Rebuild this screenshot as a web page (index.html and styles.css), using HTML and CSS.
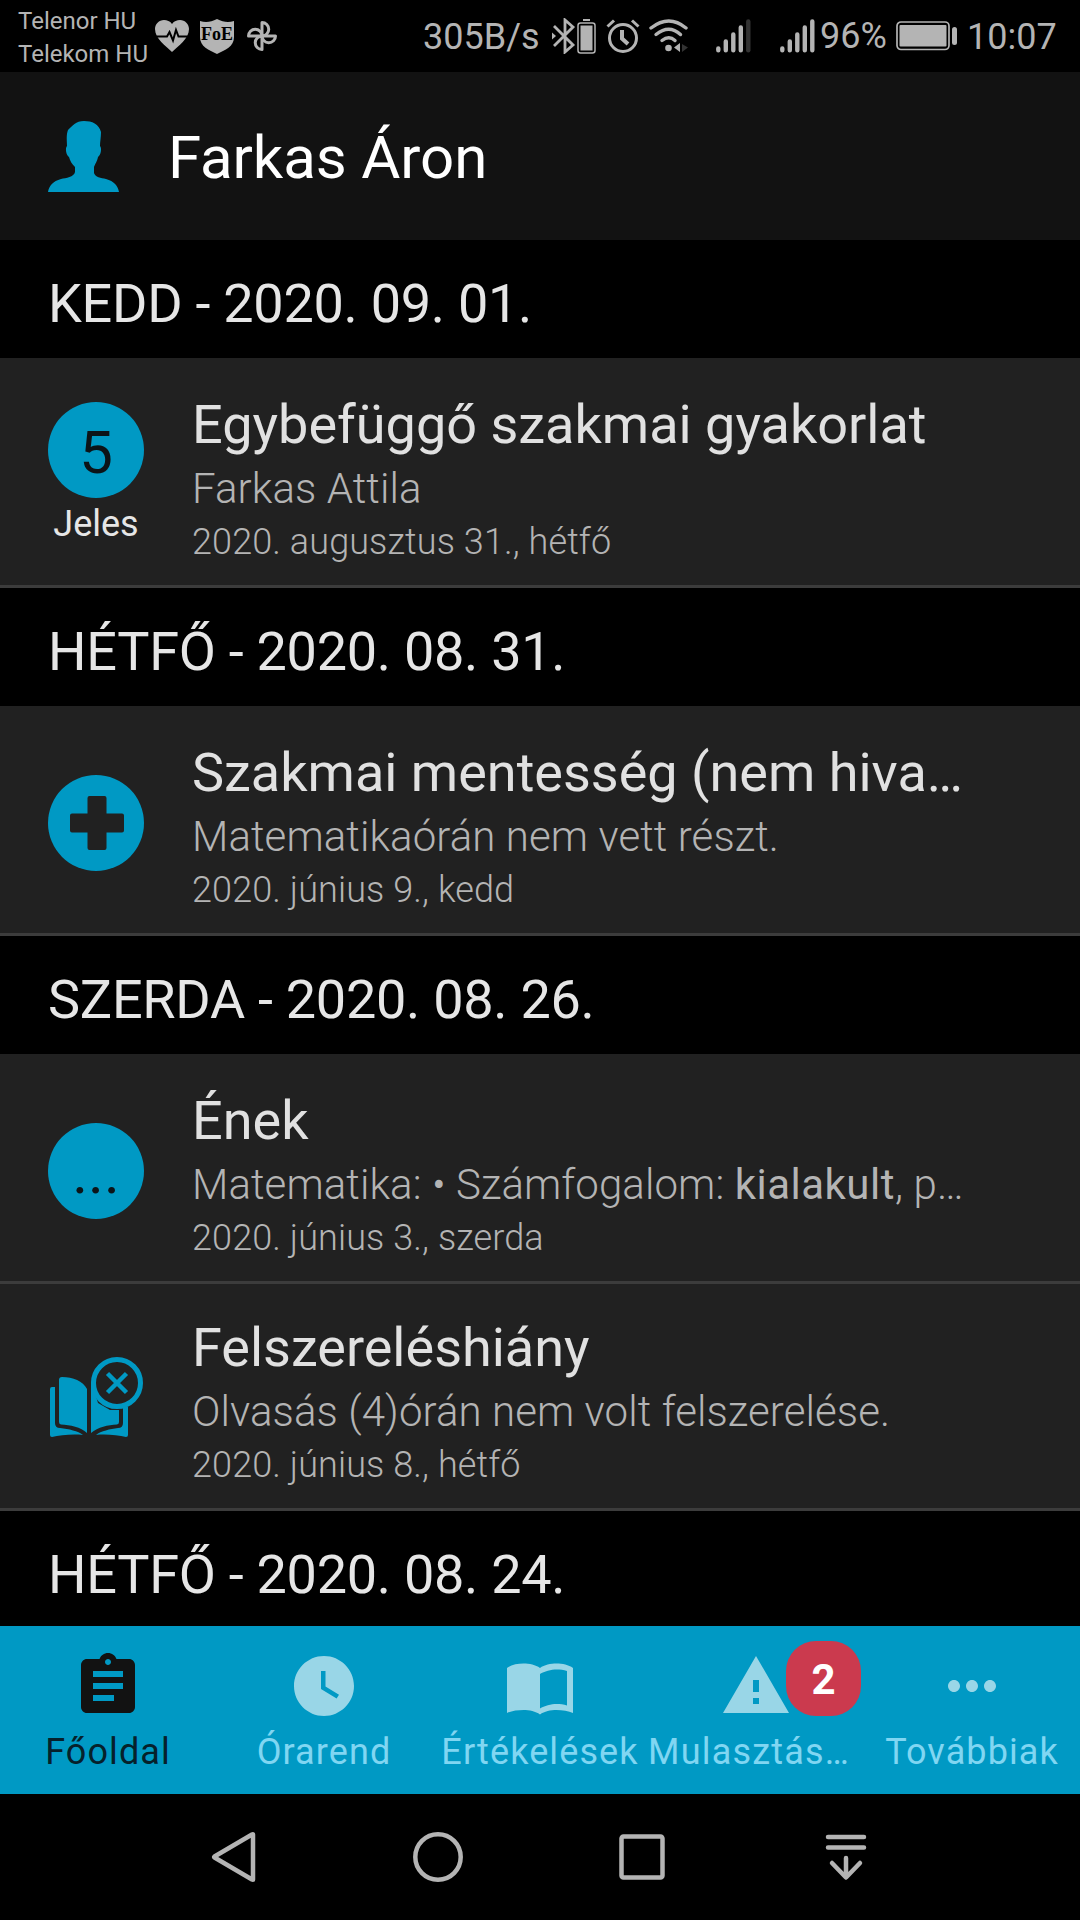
FILE: index.html
```
<!DOCTYPE html>
<html lang="hu">
<head>
  <meta charset="UTF-8">
  <meta name="viewport" content="width=device-width, initial-scale=1.0">
  <title>Farkas Áron</title>
  <link rel="stylesheet" href="styles.css">
</head>
<body>

  <!-- System status bar -->
  <div class="status">
    <div class="carriers">
      <span>Telenor HU</span>
      <span>Telekom HU</span>
    </div>
    <svg class="s-heart" width="36" height="34" viewBox="0 0 36 34">
      <path fill="#b4b4b4" d="M18 33C12 27 1 20 1 10C1 5 5 1 10 1C13 1 16 2 18 5C20 2 23 1 26 1C31 1 35 5 35 10C35 20 24 27 18 33z"/>
      <path fill="none" stroke="#000" stroke-width="2" d="M0 17.500H13L15.500 13L19 21.500L22 11L24.500 17.500H36"/>
    </svg>
    <svg class="s-shield" width="34" height="35" viewBox="0 0 34 35">
      <path fill="#b4b4b4" d="M0 2C6 4 11 3 17 0C23 3 28 4 34 2V18C34 28 25 31 17 35C9 31 0 28 0 18z"/>
      <text class="foe" x="17" y="20.500" text-anchor="middle">FoE</text>
    </svg>
    <svg class="s-fan" width="32" height="32" viewBox="0 0 32 32">
      <g fill="none" stroke="#b4b4b4" stroke-width="3" stroke-linejoin="round">
        <path d="M16 16V2.500A6.750 6.750 0 0 1 16 16z"/>
        <path d="M16 16V2.500A6.750 6.750 0 0 1 16 16z" transform="rotate(90 16 16)"/>
        <path d="M16 16V2.500A6.750 6.750 0 0 1 16 16z" transform="rotate(180 16 16)"/>
        <path d="M16 16V2.500A6.750 6.750 0 0 1 16 16z" transform="rotate(270 16 16)"/>
      </g>
    </svg>
    <span class="speed">305B/s</span>
    <svg class="s-bt" width="44" height="36" viewBox="0 0 44 36">
      <path fill="none" stroke="#b4b4b4" stroke-width="2.800" d="M2 8L21 27L13 34V2L21 9L2 28"/>
      <path fill="#b4b4b4" d="M0 14.500L4 18L0 21.500z"/>
      <rect x="31" y="1" width="7" height="2" fill="#b4b4b4"/>
      <rect x="26" y="5" width="17" height="30" rx="2.500" fill="none" stroke="#b4b4b4" stroke-width="1.500"/>
      <rect x="28.500" y="7.500" width="12" height="25" fill="#b4b4b4"/>
    </svg>
    <svg class="s-alarm" width="34" height="36" viewBox="0 0 34 36">
      <g fill="none" stroke="#b4b4b4" stroke-width="3">
        <circle cx="17" cy="20" r="13.500"/>
        <path d="M16 12V20.500L22 26" stroke-width="4"/>
        <path d="M1.500 8.500L8 2.500M32.500 8.500L26 2.500"/>
      </g>
    </svg>
    <svg class="s-wifi" width="40" height="34" viewBox="0 0 40 34">
      <g fill="none" stroke="#b4b4b4" stroke-width="3.400" stroke-linecap="round">
        <path d="M2 9Q20 -5 37 9"/>
        <path d="M7 15.500Q20 5 31.500 15.500"/>
        <path d="M13 21.500Q20 16 26 21.500"/>
      </g>
      <circle cx="19.500" cy="29" r="3.300" fill="#b4b4b4"/>
      <path fill="#b4b4b4" d="M25 28.500L31 24V33z"/>
      <path fill="#333" d="M33 25L39 28.500L33 33z"/>
    </svg>
    <svg class="s-signal" width="36" height="34" viewBox="0 0 36 34">
      <g fill="none" stroke="#b4b4b4" stroke-width="4.400" stroke-linecap="round">
        <path d="M2.300 29.500V31.200M9.800 22.500V31.200M17.300 15.500V31.200M24.800 8.500V31.200"/>
        <path stroke="#333" d="M32.300 2.500V31.200"/>
      </g>
    </svg>
    <svg class="s-signal2" width="36" height="34" viewBox="0 0 36 34">
      <path fill="none" stroke="#b4b4b4" stroke-width="4.400" stroke-linecap="round" d="M2.300 29.500V31.200M9.800 22.500V31.200M17.300 15.500V31.200M24.800 8.500V31.200M32.300 2.500V31.200"/>
    </svg>
    <span class="percent">96%</span>
    <svg class="s-battery" width="62" height="30" viewBox="0 0 62 30">
      <rect x="1" y="1" width="52" height="27.500" rx="4" fill="none" stroke="#b4b4b4" stroke-width="1.700"/>
      <rect x="3.500" y="4" width="47" height="21.500" rx="1" fill="#b4b4b4"/>
      <rect x="56" y="6" width="5" height="18" rx="2.500" fill="#b4b4b4"/>
    </svg>
    <span class="clock">10:07</span>
  </div>

  <header class="topbar">
    <svg width="71" height="71" viewBox="0 0 71 71">
      <path fill="#0099c4" d="M36 0C44 0 51 3 53 11C53 16 52 21 52 25C54 27 53 34 50 36C49 41 47 43 46 46V52C47 56 53 57 58 58C66 60 70 65 71 71H0C1 65 5 60 13 58C18 57 26 56 27 51V46C24 43 22 40 21 36C18 34 17 27 19 25C19 20 18 14 20 9C24 5 28 0 36 0z"/>
    </svg>
    <h1>Farkas Áron</h1>
  </header>

  <main class="feed">
    <h2>KEDD - 2020. 09. 01.</h2>
    <div class="item">
      <div class="mark">
        <div class="circle grade">5</div>
        <span class="mark-name">Jeles</span>
      </div>
      <div class="text">
        <h3>Egybefüggő szakmai gyakorlat</h3>
        <p class="sub">Farkas Attila</p>
        <p class="date">2020. augusztus 31., hétfő</p>
      </div>
    </div>

    <h2>HÉTFŐ - 2020. 08. 31.</h2>
    <div class="item">
      <div class="mark">
        <div class="circle plus">
          <svg width="54" height="54" viewBox="0 0 54 54">
            <path fill="#212121" d="M19.500 0H34.500Q36.500 0 36.500 2V17.500H52Q54 17.500 54 19.500V34.500Q54 36.500 52 36.500H36.500V52Q36.500 54 34.500 54H19.500Q17.500 54 17.500 52V36.500H2Q0 36.500 0 34.500V19.500Q0 17.500 2 17.500H17.500V2Q17.500 0 19.500 0z"/>
          </svg>
        </div>
      </div>
      <div class="text">
        <h3>Szakmai mentesség (nem hiva…</h3>
        <p class="sub">Matematikaórán nem vett részt.</p>
        <p class="date">2020. június 9., kedd</p>
      </div>
    </div>

    <h2>SZERDA - 2020. 08. 26.</h2>
    <div class="item">
      <div class="mark">
        <div class="circle grade">...</div>
      </div>
      <div class="text">
        <h3>Ének</h3>
        <p class="sub">Matematika: • Számfogalom: <b>kialakult</b>, p…</p>
        <p class="date">2020. június 3., szerda</p>
      </div>
    </div>
    <div class="item">
      <div class="mark">
        <!-- book with a crossed circle: missing equipment -->
        <svg width="96" height="96" viewBox="0 0 96 96">
          <g fill="#0099c4">
            <path d="M11 27Q11 24 14 24C25 24 35 28 39 36V80C33 74 22 72 13 71.500Q11 71 11 69z"/>
            <path d="M43 80V27L50 50L62 57H71V69Q71 71 69 71.500C60 72 50 74 43 80z"/>
            <path d="M4 34H7V70Q7 75 12 75C21 76 30 78 35 82C25 81 12 82 4 84Q2 84 2 82V36Q2 34 4 34z"/>
            <path d="M75 54H80V82Q80 84 78 84C70 82 57 81 48 82C53 78 62 76 70 75Q75 75 75 70z"/>
          </g>
          <circle cx="69" cy="30" r="23.500" fill="#212121" stroke="#0099c4" stroke-width="5"/>
          <path fill="none" stroke="#0099c4" stroke-width="4.500" d="M59.500 20.500L78.500 39.500M78.500 20.500L59.500 39.500"/>
        </svg>
      </div>
      <div class="text">
        <h3>Felszereléshiány</h3>
        <p class="sub">Olvasás (4)órán nem volt felszerelése.</p>
        <p class="date">2020. június 8., hétfő</p>
      </div>
    </div>

    <h2>HÉTFŐ - 2020. 08. 24.</h2>
  </main>

  <nav class="tabs">
    <a class="tab active">
      <svg width="72" height="72" viewBox="0 0 24 24"><path fill="#121212" d="M19 3h-4.180C14.400 1.840 13.300 1 12 1c-1.300 0-2.400.84-2.820 2H5c-1.100 0-2 .9-2 2v14c0 1.100.9 2 2 2h14c1.100 0 2-.9 2-2V5c0-1.100-.9-2-2-2zm-7 0c.55 0 1 .45 1 1s-.45 1-1 1-1-.45-1-1 .45-1 1-1zm2 14H7v-2h7v2zm3-4H7v-2h10v2zm0-4H7V7h10v2z"/></svg>
      <span>Főoldal</span>
    </a>
    <a class="tab">
      <svg width="72" height="72" viewBox="0 0 24 24"><path fill="#99d6e7" d="M12 2C6.500 2 2 6.500 2 12s4.500 10 10 10 10-4.500 10-10S17.500 2 12 2zm4.200 14.200L11 13V7h1.500v5.200l4.500 2.700-.8 1.300z"/></svg>
      <span>Órarend</span>
    </a>
    <a class="tab">
      <svg width="72" height="72" viewBox="0 0 24 24"><path fill="#99d6e7" d="M17.500 4.500c-1.950 0-4.050.4-5.500 1.500-1.450-1.100-3.550-1.500-5.500-1.500S2.450 4.900 1 6v15c1.450-.7 3.550-1 5.500-1s4.050.4 5.500 1.500c1.450-1.100 3.550-1.500 5.500-1.500s4.050.3 5.500 1V6c-1.450-1.100-3.550-1.500-5.500-1.500zm3.500 14c-1.100-.35-2.300-.5-3.500-.5-1.700 0-4.150.65-5.500 1.500V8c1.350-.85 3.800-1.500 5.500-1.500 1.200 0 2.400.15 3.500.5v11.500z"/></svg>
      <span>Értékelések</span>
    </a>
    <a class="tab">
      <svg width="72" height="72" viewBox="0 0 24 24"><path fill="#99d6e7" d="M1 21h22L12 2 1 21zm12-3h-2v-2h2v2zm0-4h-2v-4h2v4z"/></svg>
      <span class="long">Mulasztás…</span>
      <b class="badge">2</b>
    </a>
    <a class="tab">
      <svg width="72" height="72" viewBox="0 0 24 24"><path fill="#99d6e7" d="M6 10c-1.100 0-2 .9-2 2s.9 2 2 2 2-.9 2-2-.9-2-2-2zm12 0c-1.100 0-2 .9-2 2s.9 2 2 2 2-.9 2-2-.9-2-2-2zm-6 0c-1.100 0-2 .9-2 2s.9 2 2 2 2-.9 2-2-.9-2-2-2z"/></svg>
      <span>Továbbiak</span>
    </a>
  </nav>

  <!-- System navigation buttons -->
  <div class="sysnav">
    <svg width="50" height="50" viewBox="0 0 50 50"><path d="M44 2.500V47.500Q44 48 43 47.500L5.500 25.500Q5 25 5.500 24.500L43 2.500Q44 2 44 2.500z"/></svg>
    <svg width="50" height="50" viewBox="0 0 50 50"><circle cx="25" cy="25" r="22.700"/></svg>
    <svg width="50" height="50" viewBox="0 0 50 50"><rect x="4.500" y="4.500" width="41" height="41" rx="2"/></svg>
    <svg width="50" height="50" viewBox="0 0 50 50"><path d="M7 5H43M7 15.500H43M25 26V44.500M11 31L25 45.500L39 31"/></svg>
  </div>

</body>
</html>
```

FILE: styles.css
```
* {
  box-sizing: border-box;
}

body {
  width: 1080px;
  height: 1920px;
  margin: 0;
  display: flex;
  flex-direction: column;
  overflow: hidden;
  background-color: #000;
  font-family: Roboto, "Noto Sans", sans-serif;
}

svg {
  display: block;
  flex: none;
}

h1, h2, h3, p {
  margin: 0;
  white-space: nowrap;
}

.status {
  height: 72px;
  flex: none;
  display: flex;
  align-items: center;
  padding-left: 18px;
  color: #b4b4b4;
}

.status span {
  white-space: nowrap;
}

.carriers {
  width: 131px;
  display: flex;
  flex-direction: column;
  padding-top: 3px;
  font-size: 24px;
  line-height: 33px;
}

.foe {
  font-family: "Liberation Serif", serif;
  font-size: 18px;
  font-weight: bold;
}

.s-heart { margin-left: 5px; }
.s-shield { margin-left: 10px; }
.s-fan { margin-left: 12px; }
.s-alarm { margin-left: 10px; }
.s-wifi { margin-left: 9px; }
.s-signal { margin-left: 27px; }
.s-signal2 { margin-left: 28px; }

.speed {
  width: 129px;
  margin-left: 145px;
  padding-top: 2px;
  font-size: 36px;
}

.percent {
  width: 76px;
  margin-left: 4px;
  font-size: 36px;
}

.percent,
.s-battery {
  margin-bottom: 1px;
}

.clock {
  margin-left: 9px;
  padding-top: 2px;
  font-size: 36px;
}

.topbar {
  height: 168px;
  flex: none;
  display: flex;
  align-items: center;
  gap: 49px;
  padding-left: 48px;
  background-color: #121212;
}

h1 {
  padding-top: 3px;
  font-size: 60px;
  font-weight: 400;
  letter-spacing: -0.1px;
  color: #fff;
}

.feed {
  height: 1386px;
  flex: none;
  overflow: hidden;
}

h2 {
  height: 118px;
  padding-left: 48px;
  font-size: 54px;
  font-weight: 400;
  line-height: 128px;
  letter-spacing: -0.27px;
  color: #e6e6e6;
}

.item {
  height: 230px;
  display: flex;
  padding-left: 48px;
  background-color: #212121;
  border-bottom: 3px solid #3c3c3c;
}

/* stacked items sit a little tighter */
.item + .item {
  height: 227px;
}

.item + .item .text {
  padding-top: 32px;
}

.item + .item .mark {
  padding-top: 9px;
}

.mark {
  width: 144px;
  padding-right: 48px;
  display: flex;
  flex-direction: column;
  align-items: center;
  justify-content: center;
  padding-top: 6px;
}

.circle {
  width: 96px;
  height: 96px;
  display: flex;
  align-items: center;
  justify-content: center;
  border-radius: 50%;
  background-color: #0099c4;
}

.plus {
  padding-left: 2px;
}

.grade {
  padding-top: 5px;
  font-size: 60px;
  line-height: 60px;
  color: #0c1418;
}

.mark-name {
  margin-top: 3px;
  font-size: 36px;
  line-height: 46px;
  color: #e6e6e6;
}

.text {
  padding-top: 35px;
}

h3 {
  font-size: 54px;
  font-weight: 400;
  line-height: 64px;
  color: #e1e1e1;
}

.sub {
  margin-top: 6px;
  font-size: 42px;
  font-weight: 300;
  line-height: 52px;
  letter-spacing: 0.08px;
  color: #b4b4b4;
}

.sub b {
  letter-spacing: 0.5px;
}

.date {
  margin-top: 5px;
  font-size: 36px;
  font-weight: 300;
  line-height: 44px;
  letter-spacing: 0.1px;
  color: #b4b4b4;
}

.tabs {
  height: 168px;
  flex: none;
  display: flex;
  background-color: #0099c4;
}

.tab {
  position: relative;
  width: 216px;
  display: flex;
  flex-direction: column;
  align-items: center;
  padding-top: 24px;
  font-size: 36px;
  line-height: 44px;
  letter-spacing: 1.1px;
  white-space: nowrap;
  color: #80d6f2;
}

.tab span {
  margin-top: 8px;
}

.tab .long {
  width: 100%;
  letter-spacing: 1.2px;
}

.active {
  color: #06212b;
}

.badge {
  position: absolute;
  left: 138px;
  top: 15px;
  width: 75px;
  height: 75px;
  border-radius: 30px;
  background-color: #cb3a4e;
  color: #fff;
  font-size: 42px;
  line-height: 78px;
  letter-spacing: 0;
  text-align: center;
}

.sysnav {
  flex: 1;
  display: flex;
  justify-content: center;
  align-items: center;
  gap: 154px;
}

.sysnav svg {
  fill: none;
  stroke: #b4b4b4;
  stroke-width: 4.5;
  stroke-linecap: round;
  stroke-linejoin: round;
}
```
